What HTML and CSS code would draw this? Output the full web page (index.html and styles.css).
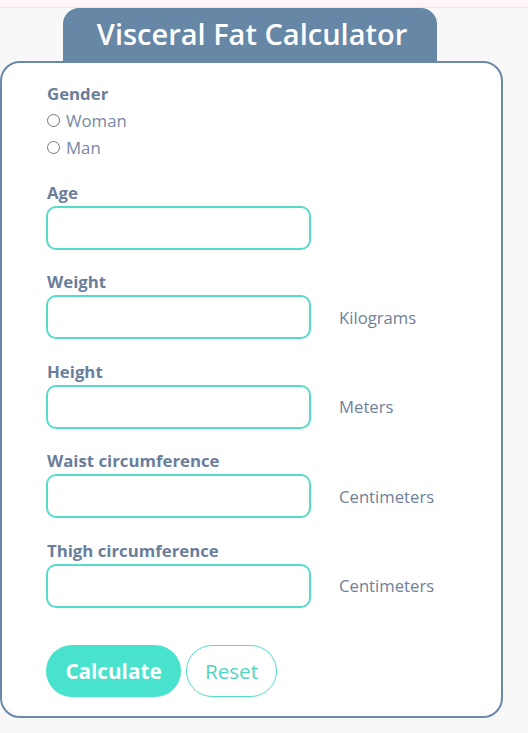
FILE: index.html
```html
<!DOCTYPE html>
<html>
<head>
<meta charset="utf-8">
<link rel="stylesheet" href="styles.css">
</head>
<body>
<div class="topbar"></div>
<div class="wrap">
  <div class="tab"><h1 class="title">Visceral Fat Calculator</h1></div>
  <form class="card">
    <div class="group group-gender">
      <div class="label">Gender</div>
      <label class="radio"><input type="radio" name="g"> Woman</label>
      <label class="radio"><input type="radio" name="g"> Man</label>
    </div>
    <div class="group">
      <div class="label">Age</div>
      <div class="row"><input class="field" type="text"></div>
    </div>
    <div class="group">
      <div class="label">Weight</div>
      <div class="row"><input class="field" type="text"><span class="unit">Kilograms</span></div>
    </div>
    <div class="group">
      <div class="label">Height</div>
      <div class="row"><input class="field" type="text"><span class="unit">Meters</span></div>
    </div>
    <div class="group">
      <div class="label">Waist circumference</div>
      <div class="row"><input class="field" type="text"><span class="unit">Centimeters</span></div>
    </div>
    <div class="group">
      <div class="label">Thigh circumference</div>
      <div class="row"><input class="field" type="text"><span class="unit">Centimeters</span></div>
    </div>
    <div class="buttons">
      <button type="button" class="btn btn-primary">Calculate</button>
      <button type="button" class="btn btn-outline">Reset</button>
    </div>
  </form>
</div>
</body>
</html>
```
FILE: styles.css
```css
* { box-sizing: border-box; }
html, body { margin: 0; padding: 0; }
body {
  background: #f8f8f8;
  font-family: "Open Sans", "Noto Sans", sans-serif;
  color: #6a7e9c;
}
.topbar {
  height: 8px;
  background: #fdf5f6;
  border-bottom: 1px solid #f1e4e6;
}
.wrap {
  width: 503px;
}
.tab {
  margin-left: 63px;
  width: 374px;
  height: 53px;
  background: #6787a7;
  border-radius: 16px 16px 0 0;
  display: flex;
  justify-content: center;
  align-items: center;
}
.title {
  margin: 0;
  color: #ffffff;
  font-size: 29px;
  font-weight: 600;
  line-height: 1;
  padding-left: 4px;
  padding-bottom: 2px;
}
.card {
  background: #ffffff;
  border: 2px solid #6b88a8;
  border-radius: 20px;
  padding: 21px 0 19px 44px;
  height: 657px;
}
.group {
  margin-bottom: 22.5px;
}
.group-gender {
  margin-bottom: 21.5px;
}
.label {
  font-size: 16.8px;
  font-weight: 700;
  line-height: 20px;
  color: #6a7e9c;
  margin-bottom: 3px;
  padding-left: 1px;
}
.radio {
  display: flex;
  align-items: center;
  height: 27px;
  font-size: 16.8px;
  color: #7888a3;
  padding-left: 1px;
}
.radio input {
  margin: 0 6px 0 0;
  width: 13px;
  height: 13px;
}
.row {
  display: flex;
  align-items: center;
}
.field {
  width: 265px;
  height: 44px;
  border: 2px solid #55dcc9;
  border-radius: 10px;
  background: #ffffff;
  margin: 0;
  outline: none;
}
.unit {
  margin-left: 28px;
  font-size: 16.7px;
  color: #6f7f99;
}
.buttons {
  margin-top: 37px;
  display: flex;
  gap: 5px;
}
.btn {
  height: 52px;
  border-radius: 26px;
  font-family: inherit;
  font-size: 20.7px;
  margin: 0;
  cursor: pointer;
}
.btn-primary {
  width: 135px;
  background: #48e2cd;
  border: none;
  color: #ffffff;
  font-weight: 700;
}
.btn-outline {
  width: 91px;
  background: #ffffff;
  border: 1px solid #55dcc9;
  color: #4fd6c3;
  font-weight: 400;
}
```
